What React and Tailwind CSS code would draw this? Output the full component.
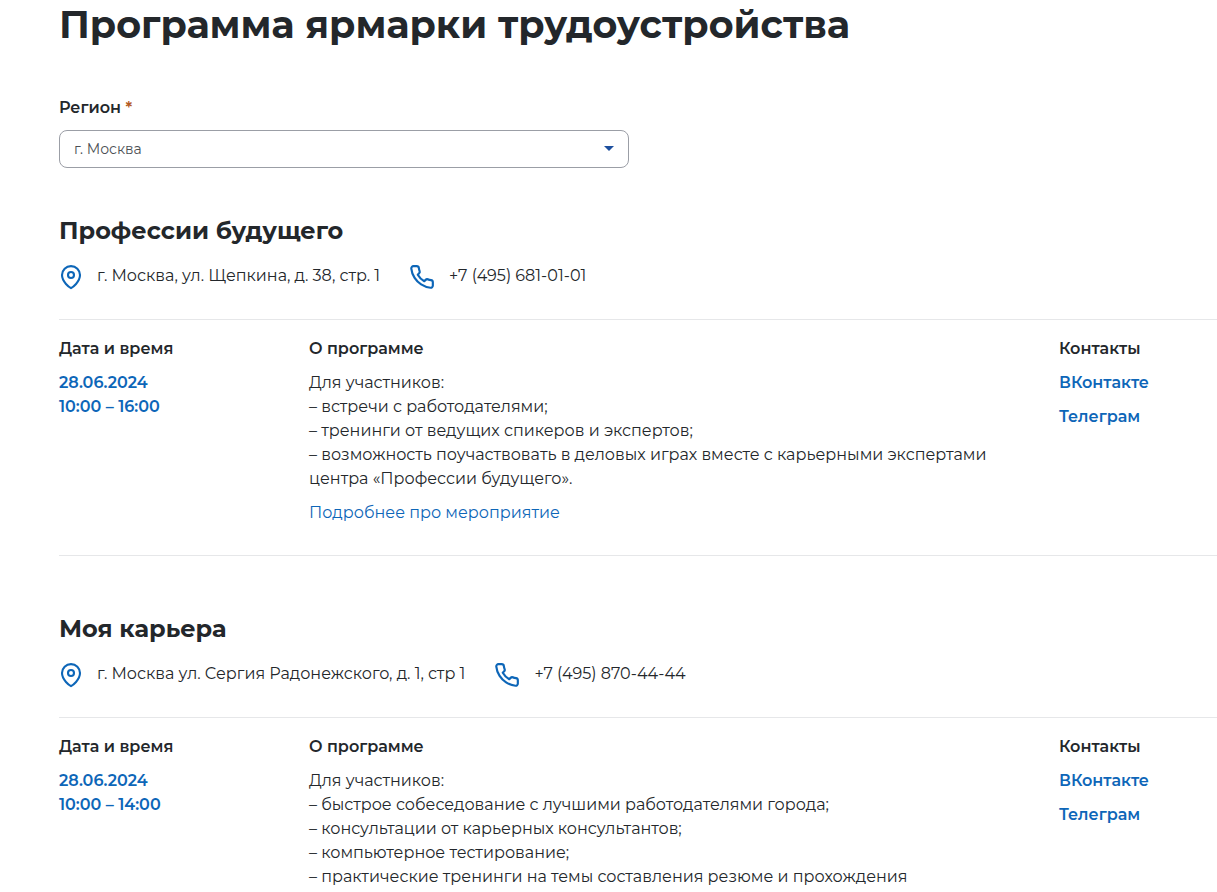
const events = [
  {
    title: "Профессии будущего",
    address: "г. Москва, ул. Щепкина, д. 38, стр. 1",
    phone: "+7 (495) 681-01-01",
    date: "28.06.2024",
    time: "10:00 – 16:00",
    program: [
      "Для участников:",
      "– встречи с работодателями;",
      "– тренинги от ведущих спикеров и экспертов;",
      "– возможность поучаствовать в деловых играх вместе с карьерными экспертами центра «Профессии будущего».",
    ],
    more: true,
  },
  {
    title: "Моя карьера",
    address: "г. Москва ул. Сергия Радонежского, д. 1, стр 1",
    phone: "+7 (495) 870-44-44",
    date: "28.06.2024",
    time: "10:00 – 14:00",
    program: [
      "Для участников:",
      "– быстрое собеседование с лучшими работодателями города;",
      "– консультации от карьерных консультантов;",
      "– компьютерное тестирование;",
      "– практические тренинги на темы составления резюме и прохождения",
    ],
    more: false,
  },
];

const PinIcon = () => (
  <svg className="w-6 h-7 shrink-0 text-[#0d66b8]" viewBox="0 0 24 28" fill="none" stroke="currentColor" strokeWidth="2.1" strokeLinecap="round" strokeLinejoin="round">
    <path d="M12 25.2C10.6 24.4 3 19 3 12.1a9 9 0 0 1 18 0c0 6.900-7.600 12.300-9 13.100z" />
    <circle cx="12" cy="12" r="3" />
  </svg>
);

const PhoneIcon = () => (
  <svg className="w-[26px] h-7 shrink-0 text-[#0d66b8]" viewBox="0 0 24 24" fill="none" stroke="currentColor" strokeWidth="2" strokeLinecap="round" strokeLinejoin="round">
    <path d="M22 16.92v3a2 2 0 0 1-2.180 2 19.790 19.790 0 0 1-8.630-3.070 19.500 19.500 0 0 1-6-6 19.790 19.790 0 0 1-3.070-8.670A2 2 0 0 1 4.110 2h3a2 2 0 0 1 2 1.720c.127.960.361 1.903.700 2.810a2 2 0 0 1-.450 2.110L8.090 9.910a16 16 0 0 0 6 6l1.270-1.270a2 2 0 0 1 2.110-.450c.907.339 1.850.573 2.810.700A2 2 0 0 1 22 16.920z" />
  </svg>
);

const EventSection = ({ event }) => (
  <section>
    <h2 className="text-2xl leading-8 font-bold">{event.title}</h2>
    <div className="flex flex-wrap items-start gap-x-[29px] mt-4">
      <div className="flex items-start gap-[14px]">
        <PinIcon />
        <span className="leading-[26px]">{event.address}</span>
      </div>
      <div className="flex items-start gap-[14px]">
        <PhoneIcon />
        <a href={`tel:${event.phone}`} className="leading-[26px]">{event.phone}</a>
      </div>
    </div>

    <div className="grid grid-cols-[250px_1fr_158px] mt-7 border-t border-[#e6e7e9] pt-[17px]">
      <div>
        <h3 className="leading-6 font-semibold mb-[10px]">Дата и время</h3>
        <p className="leading-6 font-semibold text-[#0d66b8]">{event.date}</p>
        <p className="leading-6 font-semibold text-[#0d66b8]">{event.time}</p>
      </div>
      <div className="max-w-[700px]">
        <h3 className="leading-6 font-semibold mb-[10px]">О программе</h3>
        {event.program.map((line) => (
          <p key={line} className="leading-6">{line}</p>
        ))}
        {event.more && (
          <a href="#more" className="inline-block leading-6 mt-[10px] mb-[30px] text-[#0d66b8]">Подробнее про мероприятие</a>
        )}
      </div>
      <div className="flex flex-col items-start gap-[10px]">
        <h3 className="leading-6 font-semibold">Контакты</h3>
        <a href="#vk" className="leading-6 font-semibold text-[#0d66b8]">ВКонтакте</a>
        <a href="#telegram" className="leading-6 font-semibold text-[#0d66b8]">Телеграм</a>
      </div>
    </div>
  </section>
);

export default function App() {
  return (
    <main className="bg-white pl-[59px] font-['Montserrat','Inter',sans-serif] text-base text-[#23272b]">
      <h1 className="text-[38px] leading-[50px] font-bold">Программа ярмарки трудоустройства</h1>

      <div className="mt-[46px] max-w-[570px]">
        <label htmlFor="region" className="block leading-6 font-semibold">
          Регион <span className="text-[#b35a1f]">*</span>
        </label>
        <div className="relative mt-[10px]">
          <select id="region" className="w-full h-[38px] appearance-none rounded-lg border border-[#9b9ea6] bg-white pl-[14px] text-sm text-[#4b4f54]">
            <option>г. Москва</option>
          </select>
          <svg className="absolute right-[15px] top-4 w-[10px] h-[5px] pointer-events-none" viewBox="0 0 10 5">
            <path d="M0 0h10L5 5z" fill="#1d4f9e" />
          </svg>
        </div>
      </div>

      <div className="mt-[47px]">
        <EventSection event={events[0]} />
        <hr className="border-[#e6e7e9] mb-[57px]" />
        <EventSection event={events[1]} />
      </div>
    </main>
  );
}
